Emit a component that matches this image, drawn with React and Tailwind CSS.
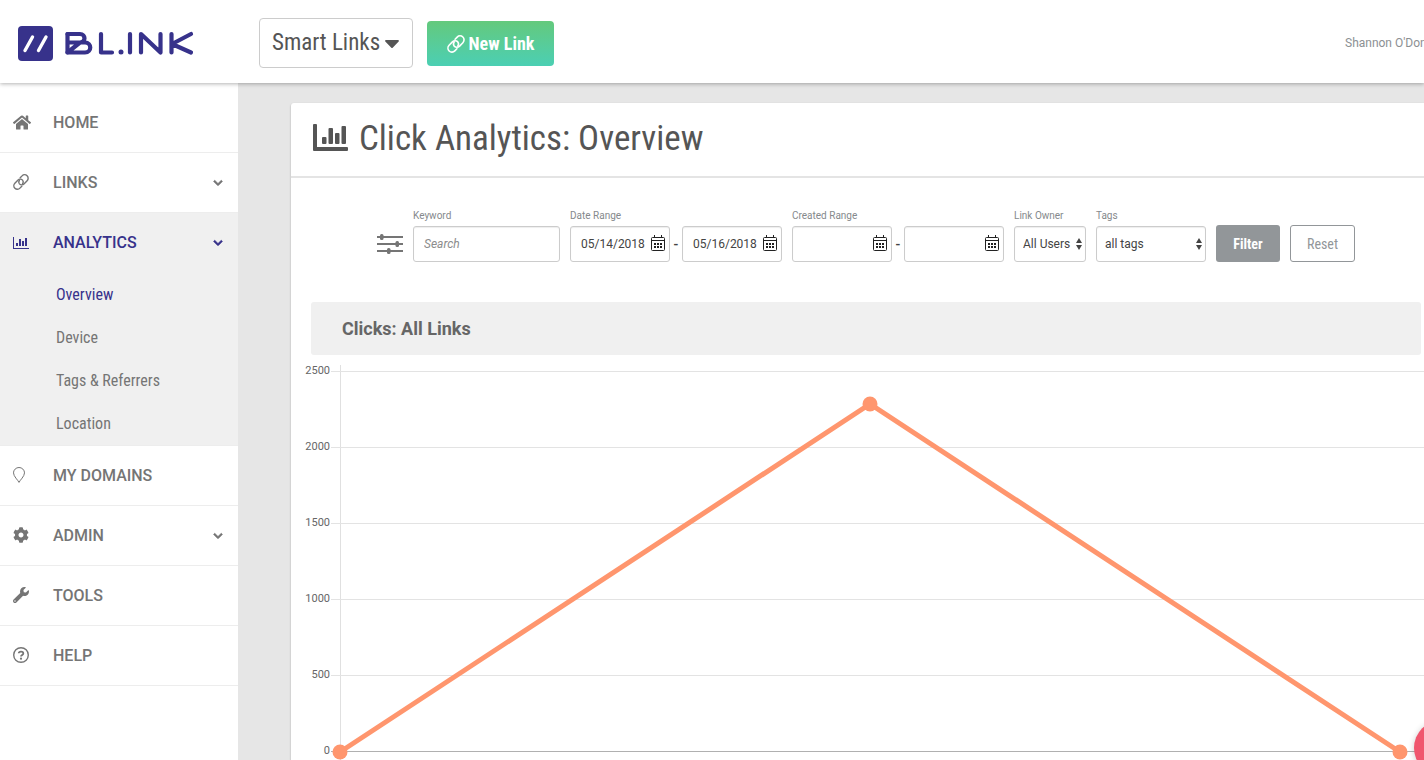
import { FaHome, FaChevronDown, FaCog, FaWrench, FaCaretDown } from 'react-icons/fa';

const CONDENSED = "font-['Roboto_Condensed','Liberation_Sans_Narrow',Roboto,sans-serif]";

const LinkIcon = ({ className }) => (
    <svg viewBox="0 0 18 18" className={className} fill="none" stroke="currentColor" strokeWidth="1.6" strokeLinecap="round">
        <path d="M8.100 4.300 L10.200 2.100 A3.900 3.900 0 0 1 15.900 7.700 L12.600 11.100 A3.700 3.700 0 0 1 7.200 11.100 A3.400 3.400 0 0 1 7.200 7" />
        <path d="M9.900 13.700 L7.800 15.900 A3.900 3.900 0 0 1 2.100 10.300 L5.400 6.900 A3.700 3.700 0 0 1 10.800 6.900 A3.400 3.400 0 0 1 10.800 11" />
    </svg>
);

const BarsIcon = ({ className }) => (
    <svg viewBox="0 0 35 27" className={className} fill="currentColor">
        <path d="M1 0h2a1 1 0 0 1 1 1v22h30a1 1 0 0 1 1 1v2a1 1 0 0 1-1 1H1a1 1 0 0 1-1-1V1a1 1 0 0 1 1-1z" />
        <rect x="9" y="13" width="4.500" height="7" rx="1" />
        <rect x="15.500" y="4" width="4.500" height="16" rx="1" />
        <rect x="22" y="9" width="4.500" height="11" rx="1" />
        <rect x="28.500" y="2" width="4.500" height="18" rx="1" />
    </svg>
);

const ThinBarsIcon = ({ className }) => (
    <svg viewBox="0 0 16 12" className={className} fill="currentColor">
        <path d="M0 0h1v11h15v1H0zM3 6h2v3H3zM6 2h2v7H6zM9 4h2v5H9zM12 1h2v8h-2z" />
    </svg>
);

const PinIcon = ({ className }) => (
    <svg viewBox="0 0 12 16" className={className} fill="none" stroke="currentColor">
        <path d="M6 15.400 C5.200 13.400 .5 9.300 .5 5.900 A5.500 5.400 0 0 1 11.500 5.900 C11.500 9.300 6.800 13.400 6 15.400z" />
    </svg>
);

const HelpIcon = ({ className }) => (
    <svg viewBox="0 0 16 16" className={className} fill="none" stroke="currentColor">
        <circle cx="8" cy="8" r="7.300" strokeWidth="1.400" />
        <path d="M5.700 6.300 C5.900 3.900 10.400 4 10.300 6.400 C10.300 7.900 8 7.900 8 9.500" strokeWidth="1.800" />
        <circle cx="8" cy="11.700" r="1.100" fill="currentColor" stroke="none" />
    </svg>
);

const SlidersIcon = ({ className }) => (
    <svg viewBox="0 0 26 20" className={className} fill="currentColor">
        <path d="M0 2h26v2H0zM0 9h26v2H0zM0 16h26v2H0z" />
        <rect x="3" y="0" width="3.500" height="6" rx="1.500" />
        <rect x="18.500" y="7" width="3.500" height="6" rx="1.500" />
        <rect x="10" y="14" width="3.500" height="6" rx="1.500" />
    </svg>
);

const CalendarIcon = ({ className }) => (
    <svg viewBox="0 0 14 16" className={className}>
        <g fill="none" stroke="currentColor">
            <rect x=".5" y="2.500" width="13" height="13" rx="1" />
            <path d="M1 5.500h12M3.500 0v3M10.500 0v3" />
        </g>
        <path d="M6 8h2v2H6zM9 8h2v2H9zM3 11h2v2H3zM6 11h2v2H6zM9 11h2v2H9zM3 8h2v2H3z" fill="currentColor" />
    </svg>
);

const SortArrows = ({ className }) => (
    <svg viewBox="0 0 6 12" className={className} fill="currentColor">
        <path d="M3 0l3 5H0zM3 12L0 7h6z" />
    </svg>
);

const Logo = () => (
    <svg viewBox="0 0 176 35" className="h-[35px] w-[176px]" role="img" aria-label="BL.INK">
        <rect width="35" height="35" rx="4" fill="#37328b" />
        <path d="M7 24.500L14.500 11M20.500 24.500L28 11" stroke="#fff" strokeWidth="3.400" strokeLinecap="round" />
        <g fill="none" stroke="#37328b" strokeWidth="4.200" strokeLinecap="round" strokeLinejoin="round">
            <path d="M49.500 8H62C68 8 68 16.500 62 16.500H51M62 16.500H67C74 16.500 74 26.500 67 26.500H49.500z" />
            <path d="M49.500 8V26.500" />
            <path d="M83 8V26.500H94M112 8V26.500M123 26.500V8L142.500 26.500V8M153.500 8V26.500M173 8L154 18L173 26.500" />
        </g>
        <circle cx="103" cy="26" r="2.500" fill="#37328b" />
    </svg>
);

const NAV = [
    { label: 'HOME', icon: FaHome, size: 'h-[17px] w-[18px]' },
    { label: 'LINKS', icon: LinkIcon, size: 'h-4 w-4', expandable: true },
    {
        label: 'ANALYTICS',
        icon: ThinBarsIcon,
        size: 'h-3 w-4',
        expandable: true,
        children: ['Overview', 'Device', 'Tags & Referrers', 'Location'],
    },
    { label: 'MY DOMAINS', icon: PinIcon, size: 'h-4 w-3' },
    { label: 'ADMIN', icon: FaCog, size: 'h-4 w-4', expandable: true },
    { label: 'TOOLS', icon: FaWrench, size: 'h-4 w-4' },
    { label: 'HELP', icon: HelpIcon, size: 'h-4 w-4' },
];

const NavItem = ({ item }) => {
    const Icon = item.icon;
    const active = Boolean(item.children);

    return (
        <li className={`border-b border-[#ededed] ${active ? 'bg-[#f0f0f0]' : ''}`}>
            <a
                href="#"
                className={`flex items-center pl-[13px] pr-[15px] font-medium ${active ? 'h-[60px] text-[#37328b]' : 'h-[59px] text-[#757575]'}`}
            >
                <span className="w-10 shrink-0 pb-px"><Icon className={item.size} /></span>
                <span className="flex-1">{item.label}</span>
                {item.expandable && (
                    <FaChevronDown className="size-[10px]" stroke="currentColor" strokeWidth="36" />
                )}
            </a>
            {item.children && (
                <ul className={CONDENSED}>
                    {item.children.map((child, i) => (
                        <li key={child}>
                            <a href="#" className={`flex h-[43px] items-center pl-14 ${i === 0 ? 'text-[#37328b]' : 'text-[#757575]'}`}>
                                {child}
                            </a>
                        </li>
                    ))}
                </ul>
            )}
        </li>
    );
};

const LABEL = 'block h-4 whitespace-nowrap text-[10px] leading-3 text-[#85898c]';
const FIELD = 'h-9 w-full rounded-[3px] border border-[#ccc] bg-white text-xs text-[#444] shadow-[inset_0_1px_1px_rgba(0,0,0,0.07)]';

const DateField = ({ label, value }) => (
    <div className="relative w-[100px]">
        <input type="text" aria-label={label} defaultValue={value} className={`${FIELD} pl-[10px] pr-6`} />
        <CalendarIcon className="pointer-events-none absolute right-[5px] top-[9px] h-4 w-[14px] text-[#222]" />
    </div>
);

const DateRange = ({ label, from, to }) => (
    <fieldset>
        <legend className={LABEL}>{label}</legend>
        <div className="flex items-center">
            <DateField label={`${label} from`} value={from} />
            <span className="w-3 text-center text-sm font-medium text-[#444]">-</span>
            <DateField label={`${label} to`} value={to} />
        </div>
    </fieldset>
);

const SelectField = ({ id, label, option, width }) => (
    <div className={width}>
        <label htmlFor={id} className={LABEL}>{label}</label>
        <div className="relative">
            <select id={id} className={`${FIELD} appearance-none pl-2 pr-3`}>
                <option>{option}</option>
            </select>
            <SortArrows className="pointer-events-none absolute right-1 top-3 h-3 w-[6px] text-[#444]" />
        </div>
    </div>
);

const FilterBar = () => (
    <form className="flex items-end gap-[10px] pb-10 pl-[86px] pt-8">
        <SlidersIcon className="mb-2 h-5 w-[26px] shrink-0 text-[#757575]" />
        <div className="w-[147px]">
            <label htmlFor="keyword" className={LABEL}>Keyword</label>
            <input id="keyword" type="text" placeholder="Search" className={`${FIELD} px-[10px] placeholder:italic placeholder:text-[#8c8c8c]`} />
        </div>
        <DateRange label="Date Range" from="05/14/2018" to="05/16/2018" />
        <DateRange label="Created Range" from="" to="" />
        <SelectField id="owner" label="Link Owner" option="All Users" width="w-[72px]" />
        <SelectField id="tags" label="Tags" option="all tags" width="w-[110px]" />
        <button type="button" className={`${CONDENSED} h-[37px] w-16 rounded-[3px] bg-[#929699] text-sm font-bold text-white`}>Filter</button>
        <button type="button" className={`${CONDENSED} h-[37px] w-[65px] rounded-[3px] border border-[#929699] bg-white text-sm text-[#929699]`}>Reset</button>
    </form>
);

const TICKS = [2500, 2000, 1500, 1000, 500, 0];
const POINTS = [[49, 397], [579, 49], [1109, 397]];

const ClicksChart = () => (
    <svg viewBox="0 0 1133 405" className="block w-full" role="img" aria-label="Clicks per day">
        <path d="M49.500 10V405" stroke="#e0e0e0" />
        {TICKS.map((tick, i) => {
            const y = 16.5 + i * 76;
            return (
                <g key={tick}>
                    <path d={`M40 ${y}H1133`} stroke={tick === 0 ? '#b0b0b0' : '#e3e3e3'} />
                    <text x="39" y={y + 2} textAnchor="end" fontSize="11" fill="#666">{tick}</text>
                </g>
            );
        })}
        <polyline points={POINTS.map((p) => p.join(',')).join(' ')} fill="none" stroke="#ff966e" strokeWidth="5" />
        {POINTS.map(([x, y]) => <circle key={x} cx={x} cy={y} r="7.500" fill="#ff966e" />)}
    </svg>
);

export default function App() {
    return (
        <div className="flex h-screen flex-col overflow-hidden bg-[#e6e6e6] font-[Roboto,sans-serif] text-base">
            <header className="z-10 flex h-[83px] shrink-0 items-center bg-white pl-[18px] shadow-[0_1px_4px_rgba(0,0,0,0.3)]">
                <div className="w-[241px] shrink-0 pt-1"><Logo /></div>
                <button type="button" className={`${CONDENSED} mt-[3px] flex h-[50px] w-[154px] items-center gap-1 rounded border border-[#ccc] pl-3 text-[23px] text-[#555]`}>
                    <span className="whitespace-nowrap pt-px">Smart Links</span>
                    <FaCaretDown className="h-6 w-4 shrink-0" />
                </button>
                <button type="button" className={`${CONDENSED} ml-[14px] mt-1 flex h-[45px] w-[127px] items-center justify-center gap-1 rounded bg-linear-to-b from-[#63c97c] to-[#4bcfb3] text-lg font-bold text-white`}>
                    <LinkIcon className="h-[18px] w-[18px] shrink-0" />
                    <span className="whitespace-nowrap">New Link</span>
                </button>
                <a href="#" className="ml-auto mt-[3px] w-[79px] overflow-hidden whitespace-nowrap text-xs text-[#8c9093]">Shannon O'Don</a>
            </header>

            <div className="flex min-h-0 flex-1">
                <nav className="w-[238px] shrink-0 bg-white pt-[10px]">
                    <ul>
                        {NAV.map((item) => <NavItem key={item.label} item={item} />)}
                    </ul>
                </nav>

                <main className="min-w-0 flex-1 pl-[53px] pt-5">
                    <section className="h-full rounded-tl-[3px] bg-white shadow-[0_1px_2px_rgba(0,0,0,0.3)]">
                        <div className="flex h-[75px] items-center gap-[11px] border-b-2 border-[#e4e4e4] pl-[22px] text-[#555]">
                            <BarsIcon className="mb-1 h-[27px] w-[35px] shrink-0" />
                            <h1 className={`${CONDENSED} whitespace-nowrap text-[35px]`}>Click Analytics: Overview</h1>
                        </div>
                        <FilterBar />
                        <h2 className="ml-5 mr-[3px] flex h-[53px] items-center rounded-[3px] bg-[#f0f0f0] pl-[31px] text-lg font-bold text-[#666]">Clicks: All Links</h2>
                        <ClicksChart />
                    </section>
                </main>
            </div>

            <button type="button" aria-label="Open chat" className="fixed -bottom-4 -right-[46px] z-20 size-14 rounded-full bg-[#f0566e] shadow-[0_1px_6px_rgba(0,0,0,0.2)]" />
        </div>
    );
}
